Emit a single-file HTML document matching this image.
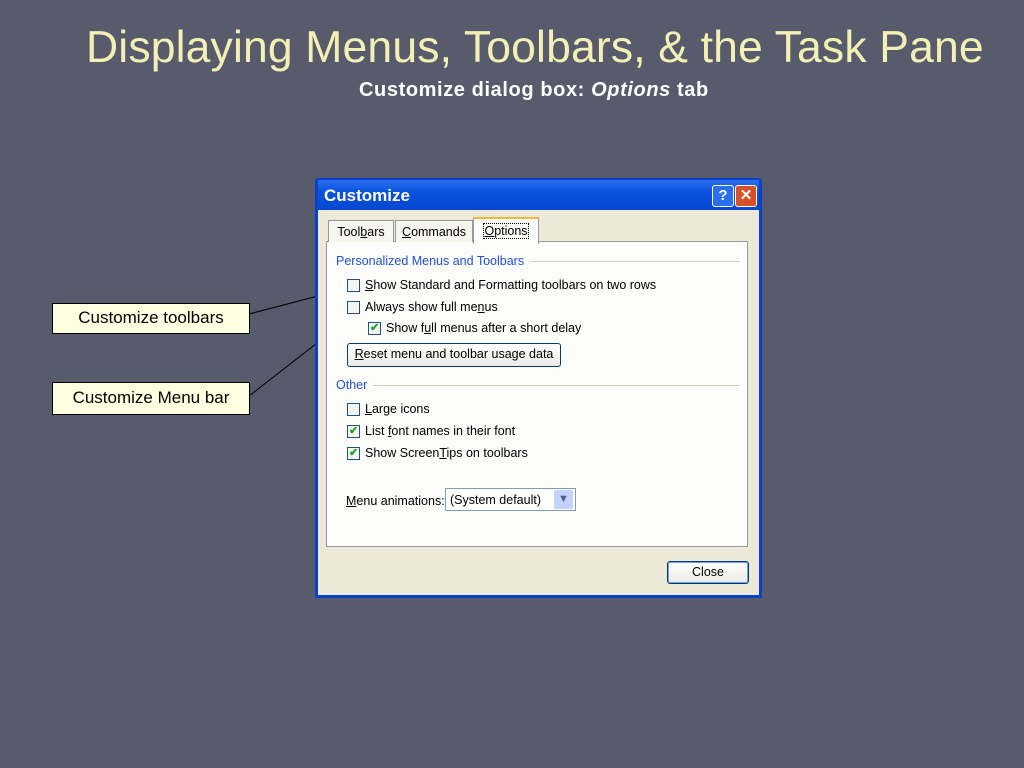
<!DOCTYPE html><html><head><style>
body{margin:0;width:1024px;height:768px;background:#575b6b;position:relative;overflow:hidden;font-family:"Liberation Sans",sans-serif}
.a{position:absolute}
.t{font-family:"Liberation Sans",sans-serif;font-size:12.5px;color:#000;white-space:nowrap}
.cb{position:absolute;width:11px;height:11px;border:1px solid #1c5180;background:#f4f4f0}
.ck{position:absolute;left:1px;top:-2px;color:#21a121;font-size:11px;font-weight:bold}
.call{position:absolute;background:#ffffe1;border:1px solid #000;font-size:17px;text-align:center;line-height:28px;color:#000}
</style></head><body>
<div class="a" style="left:86px;top:23px;font-size:44.5px;letter-spacing:0.15px;color:#f2f0b4;white-space:nowrap">Displaying Menus, Toolbars, &amp; the Task Pane</div>
<div class="a" style="left:359px;top:79px;font-size:20px;letter-spacing:0.6px;font-weight:bold;color:#fff;white-space:nowrap">Customize dialog box: <i>Options</i> tab</div>
<div class="call" style="left:52px;top:303px;width:196px;height:29px">Customize toolbars</div>
<div class="call" style="left:52px;top:382px;width:196px;height:31px;line-height:30px">Customize Menu bar</div>
<svg class="a" style="left:0;top:0" width="1024" height="768"><line x1="249" y1="314" x2="360" y2="285" stroke="#000"/><line x1="249" y1="396" x2="357" y2="312" stroke="#000"/></svg>
<div class="a" style="left:315px;top:178px;width:447px;height:420px;background:#0842c8;border-radius:4px 4px 0 0"></div>
<div class="a" style="left:318px;top:180px;width:441px;height:30px;background:linear-gradient(#2a6ef2,#0a52dc 40%,#0648d0)"></div>
<div class="a" style="left:324px;top:186px;font-family:'Liberation Sans',sans-serif;font-weight:bold;font-size:17px;color:#fff">Customize</div>
<div class="a" style="left:712px;top:185px;width:20px;height:20px;background:#2a6ef2;border:1px solid #fff;border-radius:3px;color:#fff;font-weight:bold;text-align:center;line-height:20px;font-size:15px">?</div>
<div class="a" style="left:735px;top:185px;width:20px;height:20px;background:#d8502a;border:1px solid #fff;border-radius:3px;color:#fff;font-weight:bold;text-align:center;line-height:20px;font-size:15px">✕</div>
<div class="a" style="left:318px;top:210px;width:441px;height:385px;background:#ece9d8"></div>
<div class="a" style="left:326px;top:241px;width:420px;height:304px;background:#fcfcfa;border:1px solid #919b9c"></div>
<div class="a t" style="left:328px;top:220px;width:64px;height:21px;background:#f6f5ee;border:1px solid #919b9c;border-bottom:none;text-align:center;line-height:22px">Tool<u>b</u>ars</div>
<div class="a t" style="left:395px;top:220px;width:76px;height:21px;background:#f6f5ee;border:1px solid #919b9c;border-bottom:none;text-align:center;line-height:22px"><u>C</u>ommands</div>
<div class="a t" style="left:473px;top:217px;width:64px;height:25px;background:#fcfcfa;border:1px solid #919b9c;border-top:2px solid #f4b840;border-bottom:none;text-align:center;line-height:24px"><span style="outline:1px dotted #000"><u>O</u>ptions</span></div>
<div class="a" style="left:336px;top:261px;width:404px;height:1px;background:#d0d0bf"></div>
<div class="a t" style="left:336px;top:254px;color:#2050d8;background:#fcfcfa;padding-right:6px">Personalized Menus and Toolbars</div>
<div class="cb" style="left:347px;top:279px"></div><div class="a t" style="left:365px;top:278px"><u>S</u>how Standard and Formatting toolbars on two rows</div>
<div class="cb" style="left:347px;top:301px"></div><div class="a t" style="left:365px;top:300px">Always show full me<u>n</u>us</div>
<div class="cb" style="left:368px;top:322px"><span class="ck">✔</span></div><div class="a t" style="left:386px;top:321px">Show f<u>u</u>ll menus after a short delay</div>
<div class="a t" style="left:347px;top:343px;width:212px;height:22px;border:1px solid #003c74;border-radius:3px;background:linear-gradient(#fff,#ecebe6);line-height:21px;text-align:center"><u>R</u>eset menu and toolbar usage data</div>
<div class="a" style="left:336px;top:385px;width:404px;height:1px;background:#d0d0bf"></div>
<div class="a t" style="left:336px;top:378px;color:#2050d8;background:#fcfcfa;padding-right:6px">Other</div>
<div class="cb" style="left:347px;top:403px"></div><div class="a t" style="left:365px;top:402px"><u>L</u>arge icons</div>
<div class="cb" style="left:347px;top:425px"><span class="ck">✔</span></div><div class="a t" style="left:365px;top:424px">List <u>f</u>ont names in their font</div>
<div class="cb" style="left:347px;top:447px"><span class="ck">✔</span></div><div class="a t" style="left:365px;top:446px">Show Screen<u>T</u>ips on toolbars</div>
<div class="a t" style="left:346px;top:494px"><u>M</u>enu animations:</div>
<div class="a t" style="left:445px;top:488px;height:23px;border:1px solid #7f9db9;background:#fff;line-height:23px;padding-left:4px;box-sizing:border-box;width:131px">(System default)</div>
<div class="a" style="left:554px;top:490px;width:19px;height:19px;background:#c4d3fb;color:#4d6185;font-size:11px;text-align:center;line-height:19px;border-radius:2px">▼</div>
<div class="a t" style="left:667px;top:561px;width:80px;height:21px;border:1px solid #003c74;border-radius:3px;background:linear-gradient(#fff,#ecebe6);box-shadow:0 0 0 1px #7aa0e6 inset;line-height:21px;text-align:center">Close</div>
</body></html>
